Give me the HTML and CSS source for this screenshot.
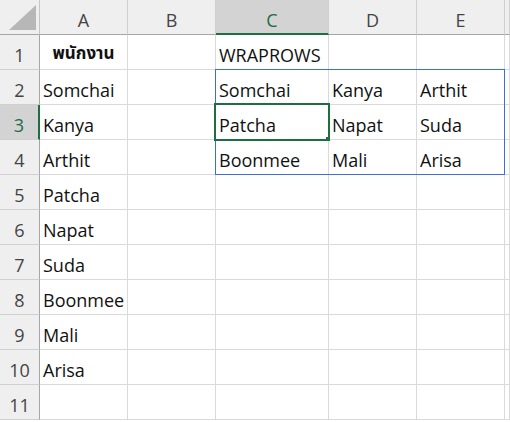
FILE: index.html
```html
<!DOCTYPE html>
<html lang="th">
<head>
  <meta charset="UTF-8" />
  <title>WRAPROWS</title>
  <link rel="stylesheet" href="styles.css">
</head>
<body>
  <div class="sheet">
    <div class="corner"><span class="tri"></span></div>
    <div class="colhead">A</div>
    <div class="colhead">B</div>
    <div class="colhead active">C</div>
    <div class="colhead">D</div>
    <div class="colhead">E</div>
    <div class="colhead"></div>

    <div class="rowhead">1</div>
    <div class="cell title">พนักงาน</div><div class="cell"></div><div class="cell">WRAPROWS</div><div class="cell"></div><div class="cell"></div><div class="cell"></div>

    <div class="rowhead">2</div>
    <div class="cell">Somchai</div><div class="cell"></div><div class="cell">Somchai</div><div class="cell">Kanya</div><div class="cell">Arthit</div><div class="cell"></div>

    <div class="rowhead active">3</div>
    <div class="cell">Kanya</div><div class="cell"></div><div class="cell">Patcha</div><div class="cell">Napat</div><div class="cell">Suda</div><div class="cell"></div>

    <div class="rowhead">4</div>
    <div class="cell">Arthit</div><div class="cell"></div><div class="cell">Boonmee</div><div class="cell">Mali</div><div class="cell">Arisa</div><div class="cell"></div>

    <div class="rowhead">5</div>
    <div class="cell">Patcha</div><div class="cell"></div><div class="cell"></div><div class="cell"></div><div class="cell"></div><div class="cell"></div>

    <div class="rowhead">6</div>
    <div class="cell">Napat</div><div class="cell"></div><div class="cell"></div><div class="cell"></div><div class="cell"></div><div class="cell"></div>

    <div class="rowhead">7</div>
    <div class="cell">Suda</div><div class="cell"></div><div class="cell"></div><div class="cell"></div><div class="cell"></div><div class="cell"></div>

    <div class="rowhead">8</div>
    <div class="cell">Boonmee</div><div class="cell"></div><div class="cell"></div><div class="cell"></div><div class="cell"></div><div class="cell"></div>

    <div class="rowhead">9</div>
    <div class="cell">Mali</div><div class="cell"></div><div class="cell"></div><div class="cell"></div><div class="cell"></div><div class="cell"></div>

    <div class="rowhead">10</div>
    <div class="cell">Arisa</div><div class="cell"></div><div class="cell"></div><div class="cell"></div><div class="cell"></div><div class="cell"></div>

    <div class="rowhead">11</div>
    <div class="cell"></div><div class="cell"></div><div class="cell"></div><div class="cell"></div><div class="cell"></div><div class="cell"></div>

    <!-- spill range of the formula in C1 and the active cell -->
    <div class="spill"></div>
    <div class="selected"><span class="handle"></span></div>
  </div>
</body>
</html>
```

FILE: styles.css
```css
body {
  margin: 0;
  background: #fff;
  font-family: "Open Sans", "Noto Sans", "Noto Sans Thai", sans-serif;
  overflow: hidden;
}
.sheet {
  position: relative;
  width: 510px;
  height: 422px;
  overflow: hidden;
  display: grid;
  grid-template-columns: 40px 88px 88px 113px 88px 88px 1fr;
  grid-template-rows: repeat(12, 35px);
}
.sheet > div {
  box-sizing: border-box;
  overflow: hidden;
}
.corner {
  position: relative;
  background: #efefef;
  border-right: 1px solid #c6c6c6;
  border-bottom: 1px solid #a6a6a6;
}
.corner .tri {
  position: absolute;
  left: 9px;
  top: 5px;
  width: 27px;
  height: 25px;
  background: #b7b7b7;
  clip-path: polygon(100% 0, 100% 100%, 0 100%);
}
.colhead {
  display: flex;
  align-items: flex-end;
  justify-content: center;
  padding-bottom: 2px;
  background: #efefef;
  color: #444;
  font-size: 18px;
  border-right: 1px solid #d0d0d0;
  border-bottom: 1px solid #a6a6a6;
}
.colhead.active {
  padding-bottom: 1px;
  background: #d3d3d3;
  color: #1e6e43;
  border-bottom: 2px solid #1e6e43;
}
.rowhead {
  display: flex;
  align-items: flex-end;
  justify-content: center;
  padding-bottom: 2px;
  background: #efefef;
  color: #444;
  font-size: 18px;
  border-right: 1px solid #a6a6a6;
  border-bottom: 1px solid #d0d0d0;
}
.rowhead.active {
  background: #d3d3d3;
  color: #1e6e43;
  border-right: 2px solid #1e6e43;
}
.cell {
  display: flex;
  align-items: flex-end;
  padding: 0 0 2px 3px;
  font-size: 18px;
  color: #111;
  white-space: nowrap;
  border-right: 1px solid #dadada;
  border-bottom: 1px solid #dadada;
}
.cell.title {
  justify-content: center;
  padding-left: 0;
  font-size: 17px;
  font-weight: bold;
}
.spill {
  position: absolute;
  left: 215px;
  top: 69px;
  width: 290px;
  height: 106px;
  box-sizing: border-box;
  border: 1px solid #3a6fd3;
}
.selected {
  position: absolute;
  left: 214px;
  top: 103px;
  width: 116px;
  height: 38px;
  box-sizing: border-box;
  border: 2px solid #1e6e43;
}
.selected .handle {
  position: absolute;
  right: -4px;
  bottom: -4px;
  width: 5px;
  height: 5px;
  background: #1e6e43;
  border: 1px solid #fff;
}
```
